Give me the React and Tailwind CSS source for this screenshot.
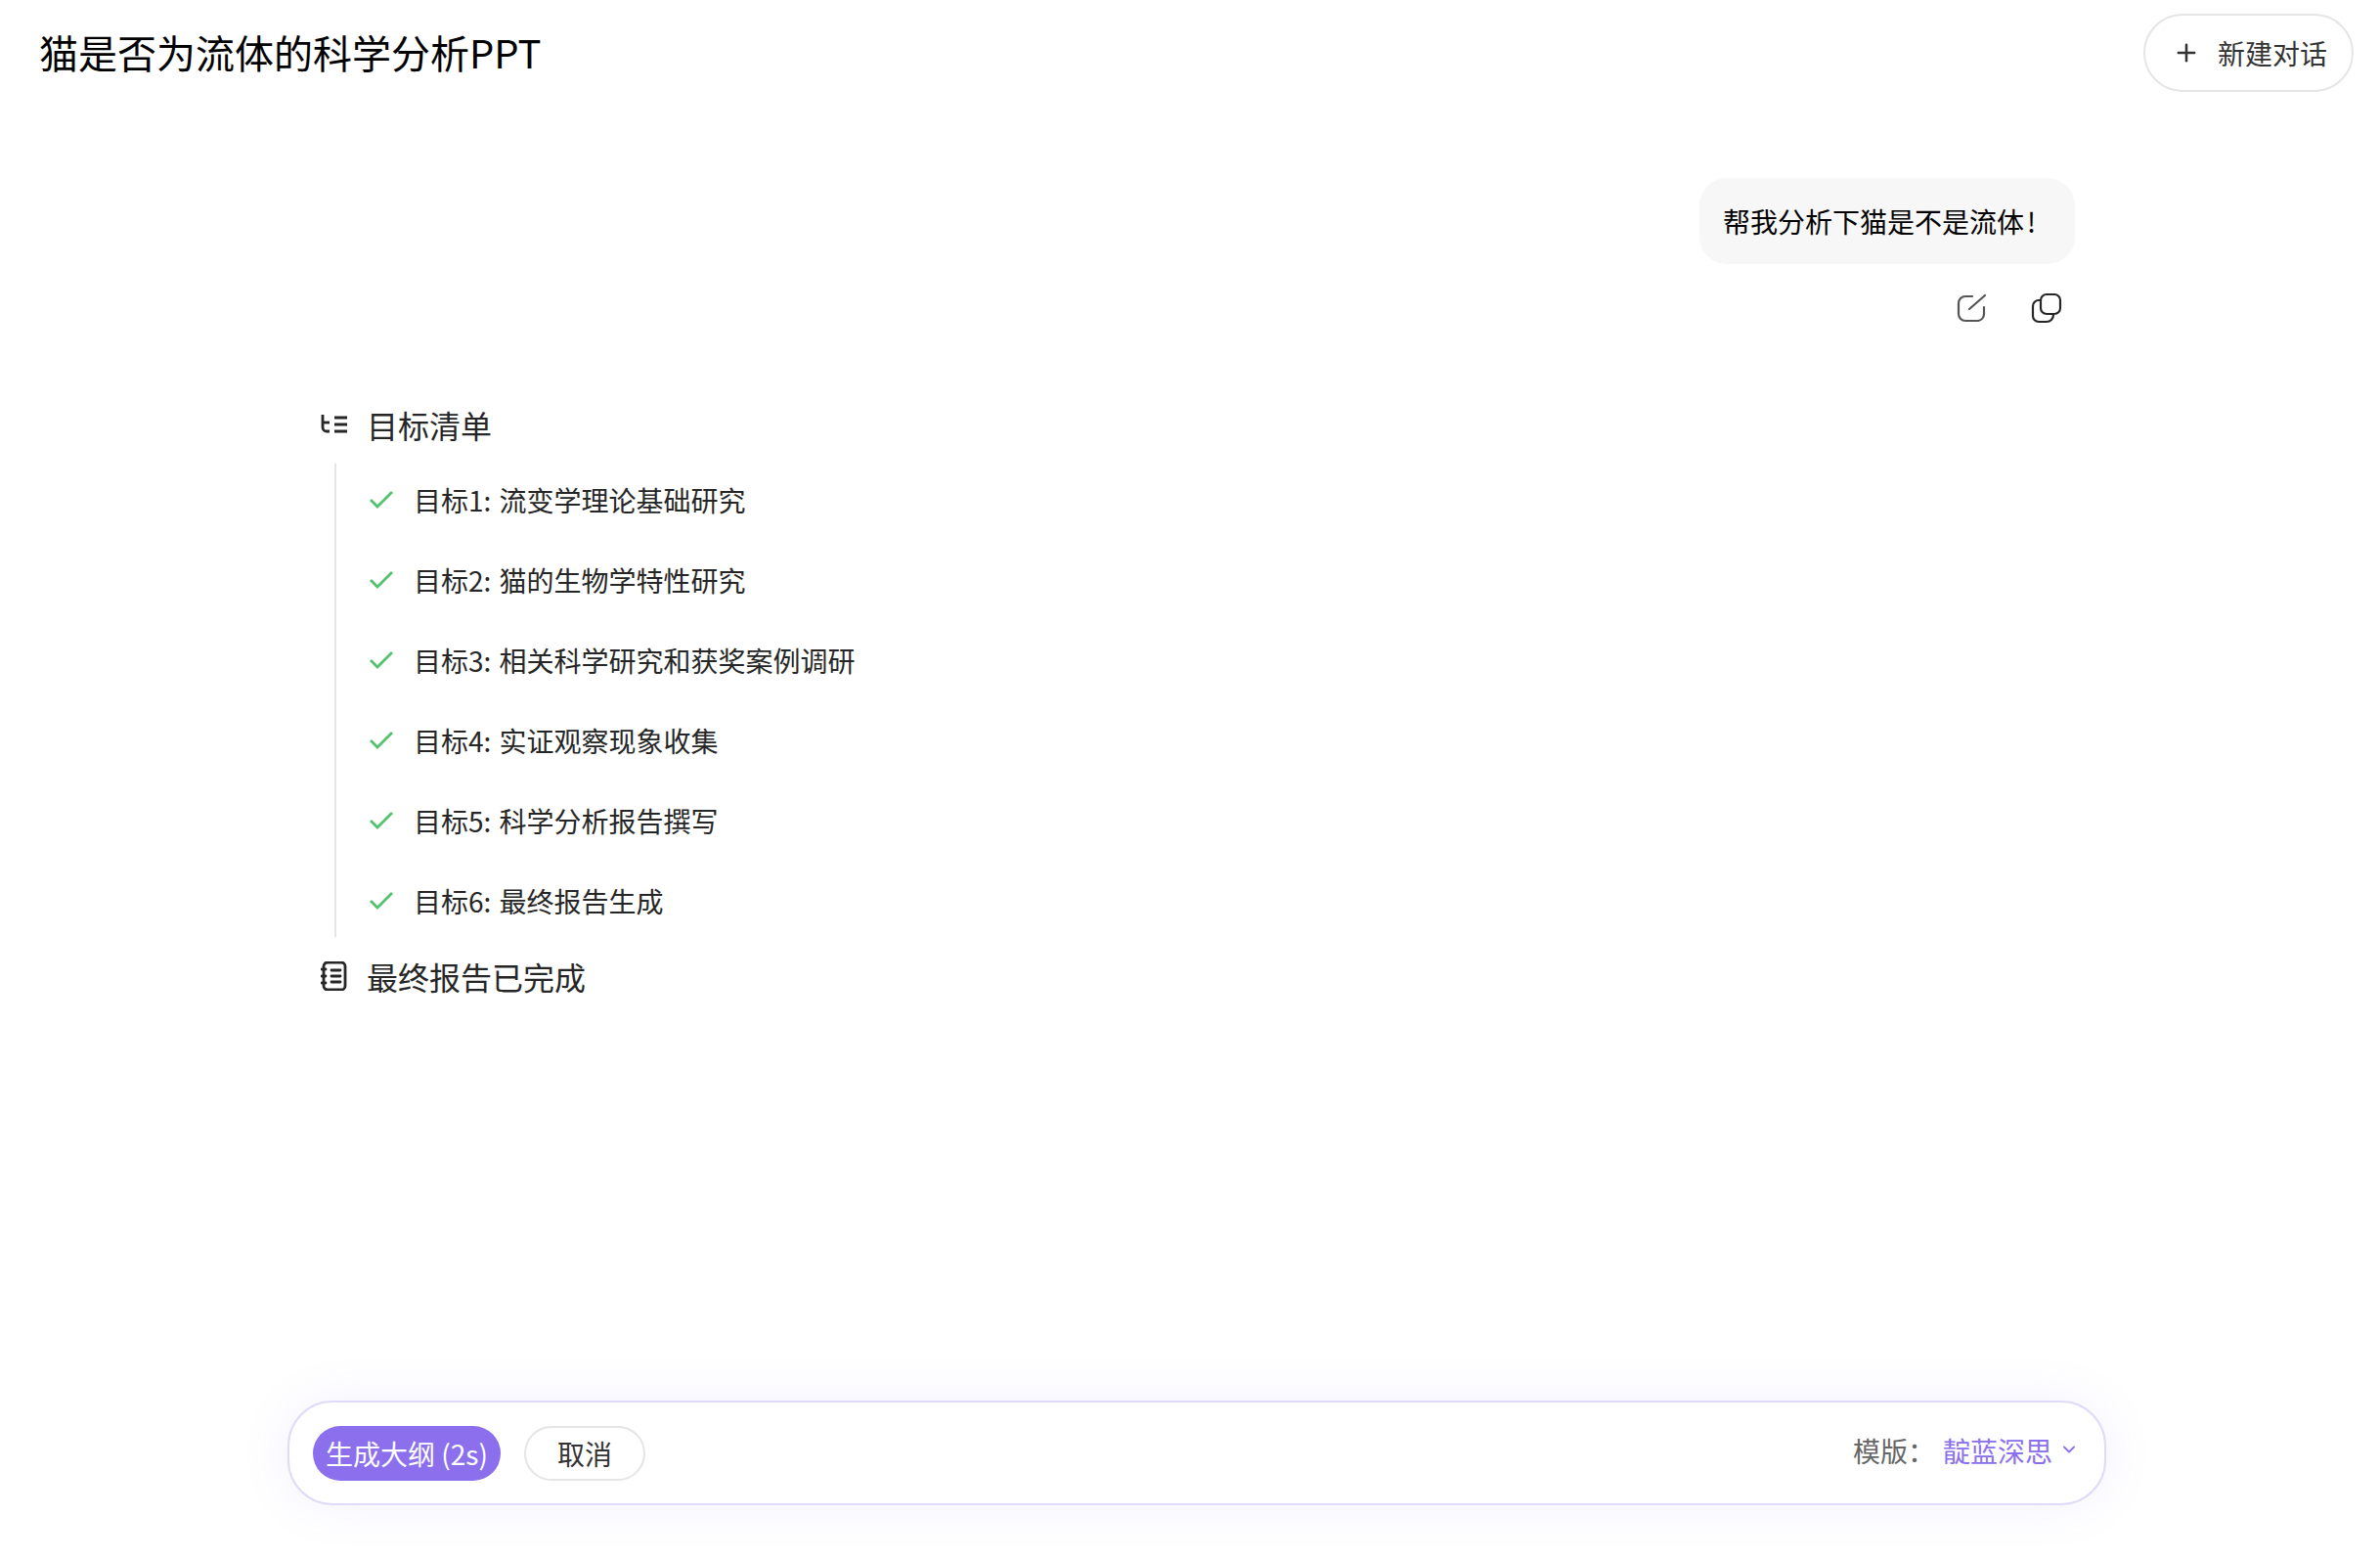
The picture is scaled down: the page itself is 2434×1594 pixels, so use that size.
import React from 'react';
import { Plus, ChevronDown } from 'lucide-react';

const font = 'font-["Noto_Sans_CJK_SC","Noto_Sans",sans-serif]';

const goals = [
  '目标1: 流变学理论基础研究',
  '目标2: 猫的生物学特性研究',
  '目标3: 相关科学研究和获奖案例调研',
  '目标4: 实证观察现象收集',
  '目标5: 科学分析报告撰写',
  '目标6: 最终报告生成',
];

const EditIcon = () => (
  <svg width="30" height="30" viewBox="0 0 30 30" fill="none" stroke="#555555" strokeWidth="2.2" strokeLinecap="round">
    <path d="M16 3H9a7 7 0 0 0-7 7v11a7 7 0 0 0 7 7h13a7 7 0 0 0 6-7v-7" />
    <path d="M13 16 L29 2" />
  </svg>
);

const CopyIcon = () => (
  <svg width="32" height="32" viewBox="0 0 32 32" fill="none" stroke="#262626" strokeWidth="2.2" strokeLinecap="round">
    <rect x="10" y="2" width="20" height="20" rx="6" />
    <path d="M9 8H8a6 6 0 0 0-6 6v10a6 6 0 0 0 6 6h8a7 7 0 0 0 7-7" />
  </svg>
);

const ListIcon = () => (
  <svg width="28" height="20" viewBox="0 0 28 20" fill="none" stroke="#262626" strokeWidth="2.8">
    <path d="M2 0v13a4 4 0 0 0 4 4h3" />
    <path d="M2 8h7" />
    <path d="M14 3h13M14 10h13M14 17h13" />
  </svg>
);

const NoteIcon = () => (
  <svg width="28" height="30" viewBox="0 0 28 30" fill="none" stroke="#262626" strokeWidth="2.8" strokeLinecap="round">
    <path d="M3 5a4 4 0 0 1 4-4h14a4 4 0 0 1 4 4v20a4 4 0 0 1-4 4H7a4 4 0 0 1-4-4z" />
    <path d="M1 8h4M1 15h4M1 22h4" />
    <path d="M11 9h9M11 15h9M11 21h9" />
  </svg>
);

const CheckIcon = () => (
  <svg width="24" height="18" viewBox="0 0 24 18" fill="none" stroke="#52c26d" strokeWidth="2.8">
    <path d="M1 9l7 7L23 1" />
  </svg>
);

export default function App() {
  return (
    <div className={`${font} flex min-h-[1594px] flex-col bg-white text-[#262626]`}>
      <header className="flex items-start justify-between pl-[40px] pr-[27px] pt-[14px]">
        <h1 className="pt-[9px] text-[40px] leading-[60px] font-normal text-black">猫是否为流体的科学分析PPT</h1>
        <button className="flex h-[80px] w-[215px] items-center justify-center gap-[18px] rounded-full border-2 border-[#e5e5e5] pl-[3px] text-[28px] text-[#333333]">
          <Plus size={28} strokeWidth={2.2} />
          <span>新建对话</span>
        </button>
      </header>

      <main className="pl-[328px] pr-[312px]">
        <div className="mt-[88px] flex flex-col items-end">
          <div className="flex h-[88px] w-[384px] items-center whitespace-nowrap rounded-[28px] bg-[#f7f7f7] px-[24px] text-[28px] text-black">
            帮我分析下猫是不是流体<span className="ml-[3px]">!</span>
          </div>
          <div className="mt-[30px] flex h-[30px] items-center gap-[46px] pr-[13px]">
            <EditIcon />
            <CopyIcon />
          </div>
        </div>

        <div className="mt-[80px] flex h-[48px] items-center gap-[19px] text-[32px]">
          <ListIcon />
          <span>目标清单</span>
        </div>

        <ul className="mt-[16px] ml-[14px] flex flex-col gap-[36px] border-l-2 border-[#e4e4ea] pl-[34px] pt-[14px] pb-[14px]">
          {goals.map((goal) => (
            <li key={goal} className="flex h-[46px] items-center gap-[21px] text-[28px] [word-spacing:2px]">
              <CheckIcon />
              <span>{goal}</span>
            </li>
          ))}
        </ul>

        <div className="mt-[16px] flex h-[48px] items-center gap-[19px] text-[32px]">
          <NoteIcon />
          <span>最终报告已完成</span>
        </div>
      </main>

      <footer className="mt-auto pb-[55px] pl-[294px]">
        <div className="flex h-[107px] w-[1860px] items-center justify-between rounded-[46px] border-2 border-[#e0dbfa] bg-white pl-[24px] pr-[26px] shadow-[0_0_50px_rgba(139,111,236,0.1)]">
          <div className="flex items-center gap-[24px]">
            <button className="h-[56px] w-[192px] rounded-full bg-[#8b6fec] text-[28px] text-white">生成大纲 (2s)</button>
            <button className="h-[56px] w-[124px] rounded-full border-2 border-[#e5e5e5] text-[28px] text-[#333333]">取消</button>
          </div>
          <div className="flex -translate-y-[3px] items-center text-[28px]">
            <span className="text-[#666666]">模版：</span>
            <span className="ml-[8px] text-[#8b6fec]">靛蓝深思</span>
            <ChevronDown size={20} strokeWidth={2.2} className="ml-[7px] -translate-y-[1px] text-[#8b6fec]" />
          </div>
        </div>
      </footer>
    </div>
  );
}
